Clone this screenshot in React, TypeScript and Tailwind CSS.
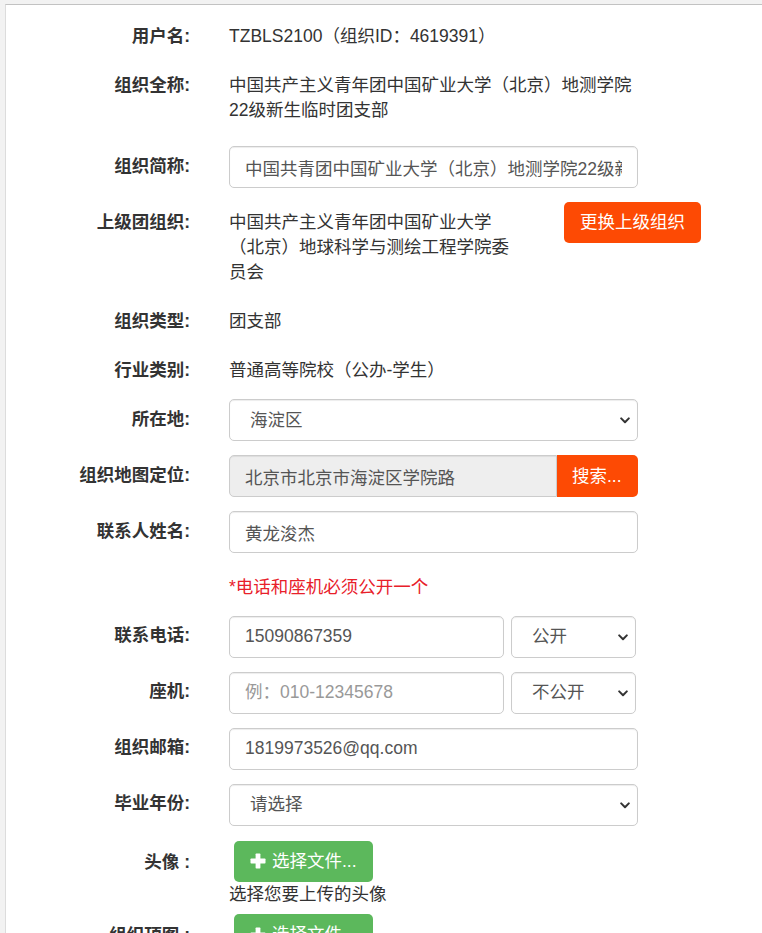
import React from "react";

const font = { fontFamily: '"Liberation Sans", "Noto Sans CJK SC", sans-serif' };

function Label({ children, pt = "pt-[7.5px]" }: { children: React.ReactNode; pt?: string }) {
  return (
    <div className={`w-[184px] shrink-0 text-right font-bold text-[#333] text-[17.5px] leading-[25px] ${pt}`}>
      {children}
    </div>
  );
}

function Row({ label, children, className = "", pt }: { label?: React.ReactNode; children: React.ReactNode; className?: string; pt?: string }) {
  return (
    <div className={`flex items-start ${className}`}>
      <Label pt={pt}>{label}</Label>
      <div className="ml-[39px]">{children}</div>
    </div>
  );
}

const baseCls =
  "h-[42px] border border-[#ccc] rounded-[5px] px-[15px] text-[17.5px] text-[#555] shadow-[inset_0_1px_1px_rgba(0,0,0,0.075)] outline-none";
const inputCls = `${baseCls} bg-white`;

function Select({ value, width, options }: { value: string; width: string; options: string[] }) {
  return (
    <div className={`relative ${width}`}>
      <select
        defaultValue={value}
        className={`${inputCls} w-full appearance-none pl-[20px] pr-[24px]`}
        style={font}
      >
        {options.map((o) => (
          <option key={o}>{o}</option>
        ))}
      </select>
      <svg
        width="10"
        height="7"
        viewBox="0 0 10 7"
        className="pointer-events-none absolute right-[8px] top-[18px]"
      >
        <path d="M1.2 1.4 L5 5.2 L8.8 1.4" fill="none" stroke="#333" strokeWidth="2" strokeLinecap="round" strokeLinejoin="round" />
      </svg>
    </div>
  );
}

function Plus() {
  return (
    <svg width="16" height="16" viewBox="0 0 16 16" className="shrink-0">
      <rect x="5.6" y="0.5" width="4.8" height="15" rx="0.7" fill="#fff" />
      <rect x="0.5" y="5.6" width="15" height="4.8" rx="0.7" fill="#fff" />
    </svg>
  );
}

function GreenButton() {
  return (
    <button className="ml-[5px] h-[41px] w-[139px] rounded-[5px] bg-[#5cb85c] text-white text-[17.5px] flex items-center pl-[16px] gap-[6px]">
      <Plus />
      <span>选择文件...</span>
    </button>
  );
}

export default function App() {
  return (
    <div className="min-h-screen bg-[#f2f2f2] pt-[4px] pl-[5px]" style={font}>
      <div className="bg-white border-t border-l border-t-[#c2c2c2] border-l-[#dcdcdc] min-h-[929px] pt-[11px] text-[17.5px] leading-[25px] text-[#333]">
        <Row label="用户名:">
          <div className="pt-[7.5px] pb-[7.5px]">TZBLS2100（组织ID：4619391）</div>
        </Row>

        <Row label="组织全称:" className="mt-[9px]">
          <div className="pt-[7.5px] pb-[7.5px] w-[409px]">中国共产主义青年团中国矿业大学（北京）地测学院22级新生临时团支部</div>
        </Row>

        <Row label="组织简称:" className="mt-[16px]">
          <input
            readOnly
            value="中国共青团中国矿业大学（北京）地测学院22级新生临时团支部"
            className={`${inputCls} w-[409px]`}
            style={font}
          />
        </Row>

        <Row label="上级团组织:" className="mt-[14px]">
          <div className="flex items-start">
            <div className="w-[285px] pt-[7.5px] pb-[7.5px]">
              中国共产主义青年团中国矿业大学（北京）地球科学与测绘工程学院委员会
            </div>
            <button className="ml-[50px] h-[41px] w-[137px] rounded-[5px] bg-[#fd4a04] text-white text-[17.5px]">
              更换上级组织
            </button>
          </div>
        </Row>

        <Row label="组织类型:" className="mt-[9px]">
          <div className="pt-[7.5px] pb-[7.5px]">团支部</div>
        </Row>

        <Row label="行业类别:" className="mt-[9px]">
          <div className="pt-[7.5px] pb-[7.5px]">普通高等院校（公办-学生）</div>
        </Row>

        <Row label="所在地:" className="mt-[9px]">
          <Select value="海淀区" width="w-[409px]" options={["海淀区", "朝阳区", "东城区", "西城区"]} />
        </Row>

        <Row label="组织地图定位:" className="mt-[14px]">
          <div className="flex w-[409px] h-[42px]">
            <input
              readOnly
              value="北京市北京市海淀区学院路"
              className={`${baseCls} bg-[#eeeeee] flex-1 min-w-0 rounded-r-none`}
              style={font}
            />
            <button className="w-[81px] h-[42px] bg-[#fd4a04] text-white text-[17.5px] rounded-r-[5px] text-left pl-[15px]">
              搜索...
            </button>
          </div>
        </Row>

        <Row label="联系人姓名:" className="mt-[14px]">
          <input readOnly value="黄龙浚杰" className={`${inputCls} w-[409px]`} style={font} />
        </Row>

        <Row className="mt-[14px]" label="">
          <div className="pt-[7.5px] text-[#e8202a]">*电话和座机必须公开一个</div>
        </Row>

        <Row label="联系电话:" className="mt-[16px]">
          <div className="flex gap-[7px]">
            <input readOnly value="15090867359" className={`${inputCls} w-[275px]`} style={font} />
            <Select value="公开" width="w-[125px]" options={["公开", "不公开"]} />
          </div>
        </Row>

        <Row label="座机:" className="mt-[14px]">
          <div className="flex gap-[7px]">
            <input
              placeholder="例：010-12345678"
              className={`${inputCls} w-[275px] placeholder:text-[#999]`}
              style={font}
            />
            <Select value="不公开" width="w-[125px]" options={["公开", "不公开"]} />
          </div>
        </Row>

        <Row label="组织邮箱:" className="mt-[14px]">
          <input readOnly value="1819973526@qq.com" className={`${inputCls} w-[409px]`} style={font} />
        </Row>

        <Row label="毕业年份:" className="mt-[14px]">
          <Select value="请选择" width="w-[409px]" options={["请选择", "2022", "2023", "2024"]} />
        </Row>

        <Row label="头像 :" className="mt-[15px]" pt="pt-[9px]">
          <div>
            <GreenButton />
            <div className="text-[#333]">选择您要上传的头像</div>
          </div>
        </Row>

        <Row label="组织顶图 :" className="mt-[7.5px]" pt="pt-[9px]">
          <GreenButton />
        </Row>
      </div>
    </div>
  );
}
